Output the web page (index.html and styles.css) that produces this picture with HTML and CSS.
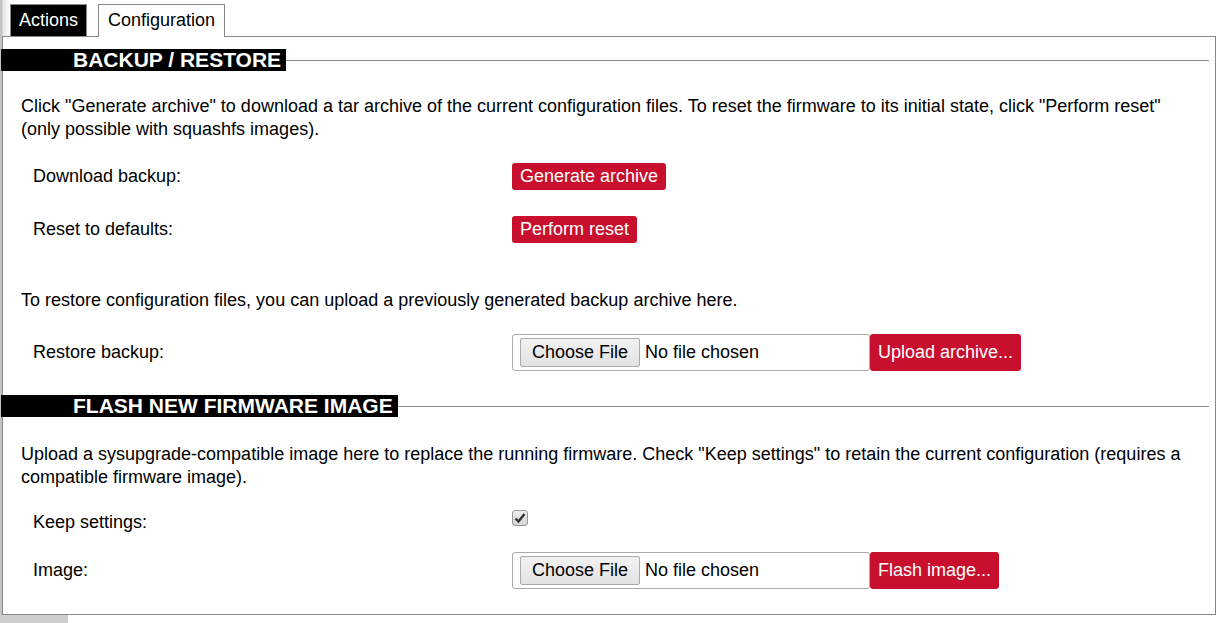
FILE: index.html
```html
<html>
<head>
    <meta charset="UTF-8">
    <title>Backup / Flash Firmware</title>
    <link rel="stylesheet" href="styles.css">
</head>
<body>
<div class="tabs">
    <span class="tab dark">Actions</span>
    <span class="tab active">Configuration</span>
</div>
<div class="panel">
    <div class="section-head"><span class="title">BACKUP / RESTORE</span><span class="rule"></span></div>
    <p class="note p-first">Click "Generate archive" to download a tar archive of the current configuration files. To reset the firmware to its initial state, click "Perform reset" (only possible with squashfs images).</p>
    <div class="row r-download">
        <span class="label">Download backup:</span>
        <div><input type="button" class="btn" value="Generate archive"/></div>
    </div>
    <div class="row r-reset">
        <span class="label">Reset to defaults:</span>
        <div><input type="button" class="btn" value="Perform reset"/></div>
    </div>
    <p class="note p-restore">To restore configuration files, you can upload a previously generated backup archive here.</p>
    <div class="row r-upload">
        <span class="label">Restore backup:</span>
        <div class="upload">
            <input type="file" class="file"/>
            <input type="button" class="btn tall" value="Upload archive..."/>
        </div>
    </div>

    <div class="section-head s-flash"><span class="title">FLASH NEW FIRMWARE IMAGE</span><span class="rule"></span></div>
    <p class="note p-flash">Upload a sysupgrade-compatible image here to replace the running firmware. Check "Keep settings" to retain the current configuration (requires a compatible firmware image).</p>
    <div class="row r-keep">
        <span class="label">Keep settings:</span>
        <div><span class="check"><svg width="12" height="12" viewBox="0 0 12 12"><path d="M1.5 6.5 L4.5 9.5 L10.5 2" fill="none" stroke="#333" stroke-width="2.4"/></svg></span></div>
    </div>
    <div class="row r-image">
        <span class="label">Image:</span>
        <div class="upload">
            <input type="file" class="file"/>
            <input type="button" class="btn tall" value="Flash image..."/>
        </div>
    </div>
</div>
</body>
</html>
```

FILE: styles.css
```css
body {
    margin: 0;
    font-family: "Liberation Sans", Arial, sans-serif;
    font-size: 18px;
    color: #000;
    background:
        linear-gradient(#cfcfcf, #cfcfcf) left bottom / 68px 8px no-repeat,
        linear-gradient(to right, #c4c4c4 0, #c4c4c4 2px, #e6e6e6 3px, #ffffff 10px) left top / 10px 36px no-repeat,
        linear-gradient(#c4c4c4, #c4c4c4) left top / 2px 100% no-repeat,
        #fff;
}

.tabs {
    display: flex;
    gap: 11px;
    padding: 4px 0 0 10px;
    height: 32px;
}

.tab {
    position: relative;
    border: 1px solid #888;
    border-bottom: none;
    padding: 0 8px;
    line-height: 31px;
    height: 32px;
    box-sizing: border-box;
}

.tab.dark {
    background-color: #000;
    color: #fff;
    padding: 0 8px;
}

.tab.active {
    background-color: #fff;
    height: 33px;
    padding: 0 9px;
    z-index: 1;
}

.panel {
    margin-left: 2px;
    width: 1214px;
    box-sizing: border-box;
    border: 1px solid #888;
    padding-bottom: 25px;
}

.section-head {
    display: flex;
    align-items: center;
    margin: 12px 6px 0 -2px;
}

.section-head.s-flash {
    margin-top: 24px;
}

.section-head .title {
    background-color: #000;
    color: #fff;
    font-weight: bold;
    font-size: 21px;
    line-height: 22px;
    padding: 0 5px 0 72px;
}

.section-head .rule {
    flex: 1;
    border-top: 1px solid #888;
}

.note {
    margin: 24px 18px 0 18px;
    line-height: 23px;
}

.p-restore {
    margin-top: 46px;
}

.p-flash {
    margin-top: 26px;
}

.row {
    display: grid;
    grid-template-columns: 479px 1fr;
    align-items: center;
    padding-left: 30px;
    min-height: 27px;
}

.r-download { margin-top: 22px; }
.r-reset { margin-top: 26px; }
.r-upload { margin-top: 22px; }
.r-keep { margin-top: 20px; }
.r-image { margin-top: 16px; }

.btn {
    font-family: "Liberation Sans", Arial, sans-serif;
    font-size: 18px;
    height: 27px;
    line-height: 27px;
    padding: 0 8px;
    color: #fff;
    background-color: #c8102e;
    border: none;
    border-radius: 3px;
    display: block;
}

.btn.tall {
    height: 37px;
    line-height: 37px;
}

.upload {
    display: flex;
}

.file {
    width: 358px;
    height: 37px;
    box-sizing: border-box;
    border: 1px solid #aaa;
    border-radius: 3px;
    padding: 3px 7px;
    font-family: "Liberation Sans", Arial, sans-serif;
    font-size: 18px;
    color: #000;
    background-color: #fff;
}

.file::file-selector-button {
    font-family: "Liberation Sans", Arial, sans-serif;
    font-size: 18px;
    height: 29px;
    padding: 0 11px;
    margin-right: 5px;
    color: #000;
    background: linear-gradient(#f2f2f2, #e2e2e2);
    border: 1px solid #aaa;
    border-radius: 2px;
}

.check {
    display: flex;
    align-items: center;
    justify-content: center;
    width: 16px;
    height: 16px;
    margin-bottom: 10px;
    box-sizing: border-box;
    border: 1px solid #999;
    border-radius: 3px;
    background: linear-gradient(#eee, #d6d6d6);
}
```
